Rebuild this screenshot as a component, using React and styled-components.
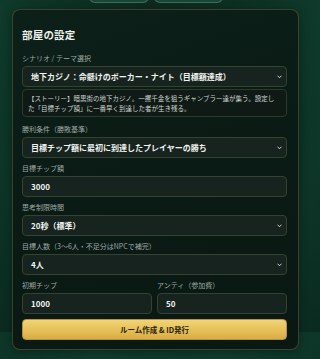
import React from "react";
import styled, { createGlobalStyle } from "styled-components";

const Global = createGlobalStyle`
  html, body { margin: 0; padding: 0; }
  body {
    width: 320px;
    height: 359px;
    overflow: hidden;
    background: radial-gradient(ellipse at 50% 10%, #0d2a20 0%, #0d3326 45%, #0f3d2e 75%, #0d3528 100%);
    font-family: "Noto Sans CJK JP", "Noto Sans", sans-serif;
    color: #e8ece9;
  }
`;

const Page = styled.div`
  padding: 0 21px 0 12px;
  background: linear-gradient(180deg, rgba(0,0,0,0) 0%, rgba(5,20,15,0.35) 100%);
  height: 359px;
  box-sizing: border-box;
`;

const Tabs = styled.div`
  display: flex;
  justify-content: center;
  gap: 5px;
  margin-top: -27px;
  padding-left: 1px;
`;

const Tab = styled.div`
  width: ${(p) => p.$w}px;
  height: 30px;
  border-radius: 6px;
  background: #17473a;
  border: 1px solid rgba(150, 170, 130, 0.35);
  box-sizing: border-box;
`;

const Card = styled.div`
  margin-top: 6px;
  border: 1px solid rgba(190, 170, 100, 0.28);
  border-radius: 8px;
  background: linear-gradient(160deg, #0c2019 0%, #0a1a15 50%, #0a1813 100%);
  padding: 16px 11px 9px 9px;
  box-shadow: 0 2px 10px rgba(0, 0, 0, 0.35);
`;

const Title = styled.h2`
  margin: 0 0 9px 0;
  font-size: 10.5px;
  line-height: 18px;
  font-weight: 700;
  color: #eef0ea;
  letter-spacing: 0.2px;
  font-family: "Noto Sans CJK JP", serif;
`;

const Group = styled.div`
  margin-top: ${(p) => p.$mt ?? 5}px;
  display: flex;
  flex-direction: column;
  min-width: 0;
`;

const Label = styled.div`
  font-size: 7px;
  line-height: 11px;
  color: #9fa8a2;
  margin-bottom: 2px;
  white-space: nowrap;
`;

const FieldBox = styled.div`
  position: relative;
  height: 21px;
  box-sizing: border-box;
  border: 1px solid #34422f;
  border-radius: 4px;
  background: #16231e;
  display: flex;
  align-items: center;
  padding: 0 8px;
  font-size: 8px;
  font-weight: 600;
  color: #f1f3ef;
  white-space: nowrap;
  overflow: hidden;
`;

const Chevron = styled.svg`
  position: absolute;
  right: 4px;
  top: 50%;
  margin-top: -2px;
  width: 5px;
  height: 4px;
`;

const Story = styled.div`
  margin-top: 2px;
  border: 1px solid #2c3a2c;
  border-radius: 4px;
  background: #0f1a16;
  padding: 3px 6px 3px 5px;
  font-size: 6.5px;
  line-height: 10px;
  color: #cdd4cf;
`;

const Row = styled.div`
  display: grid;
  grid-template-columns: 1fr 1fr;
  gap: 5px;
`;

const Button = styled.button`
  margin-top: 4px;
  width: 100%;
  height: 21px;
  border: 1px solid #b8923a;
  border-radius: 4px;
  background: linear-gradient(180deg, #f2d576 0%, #e3bd55 60%, #d8ad45 100%);
  color: #2b230e;
  font-family: "Noto Sans CJK JP", sans-serif;
  font-size: 7.5px;
  font-weight: 700;
  padding: 0;
  cursor: pointer;
`;

function Select({ children }) {
  return (
    <FieldBox>
      {children}
      <Chevron viewBox="0 0 10 8">
        <path d="M1.5 2 L5 5.5 L8.5 2" stroke="#e8ece9" strokeWidth="1.8" fill="none" strokeLinecap="round" strokeLinejoin="round" />
      </Chevron>
    </FieldBox>
  );
}

export default function App() {
  return (
    <>
      <Global />
      <Page>
        <Tabs>
          <Tab $w={60} />
          <Tab $w={69} />
        </Tabs>
        <Card>
          <Title>部屋の設定</Title>
          <Group $mt={0}>
            <Label>シナリオ / テーマ選択</Label>
            <Select>地下カジノ：命懸けのポーカー・ナイト（目標額達成）</Select>
            <Story>
              【ストーリー】暗黒街の地下カジノ。一攫千金を狙うギャンブラー達が集う。設定した「目標チップ額」に一番早く到達した者が生き残る。
            </Story>
          </Group>
          <Group $mt={7}>
            <Label>勝利条件（勝敗基準）</Label>
            <Select>目標チップ額に最初に到達したプレイヤーの勝ち</Select>
          </Group>
          <Group>
            <Label>目標チップ額</Label>
            <FieldBox>3000</FieldBox>
          </Group>
          <Group>
            <Label>思考制限時間</Label>
            <Select>20秒（標準）</Select>
          </Group>
          <Group>
            <Label>目標人数（3〜6人・不足分はNPCで補完）</Label>
            <Select>4人</Select>
          </Group>
          <Row>
            <Group>
              <Label>初期チップ</Label>
              <FieldBox>1000</FieldBox>
            </Group>
            <Group>
              <Label>アンティ（参加費）</Label>
              <FieldBox>50</FieldBox>
            </Group>
          </Row>
          <Button>ルーム作成 &amp; ID発行</Button>
        </Card>
      </Page>
    </>
  );
}
